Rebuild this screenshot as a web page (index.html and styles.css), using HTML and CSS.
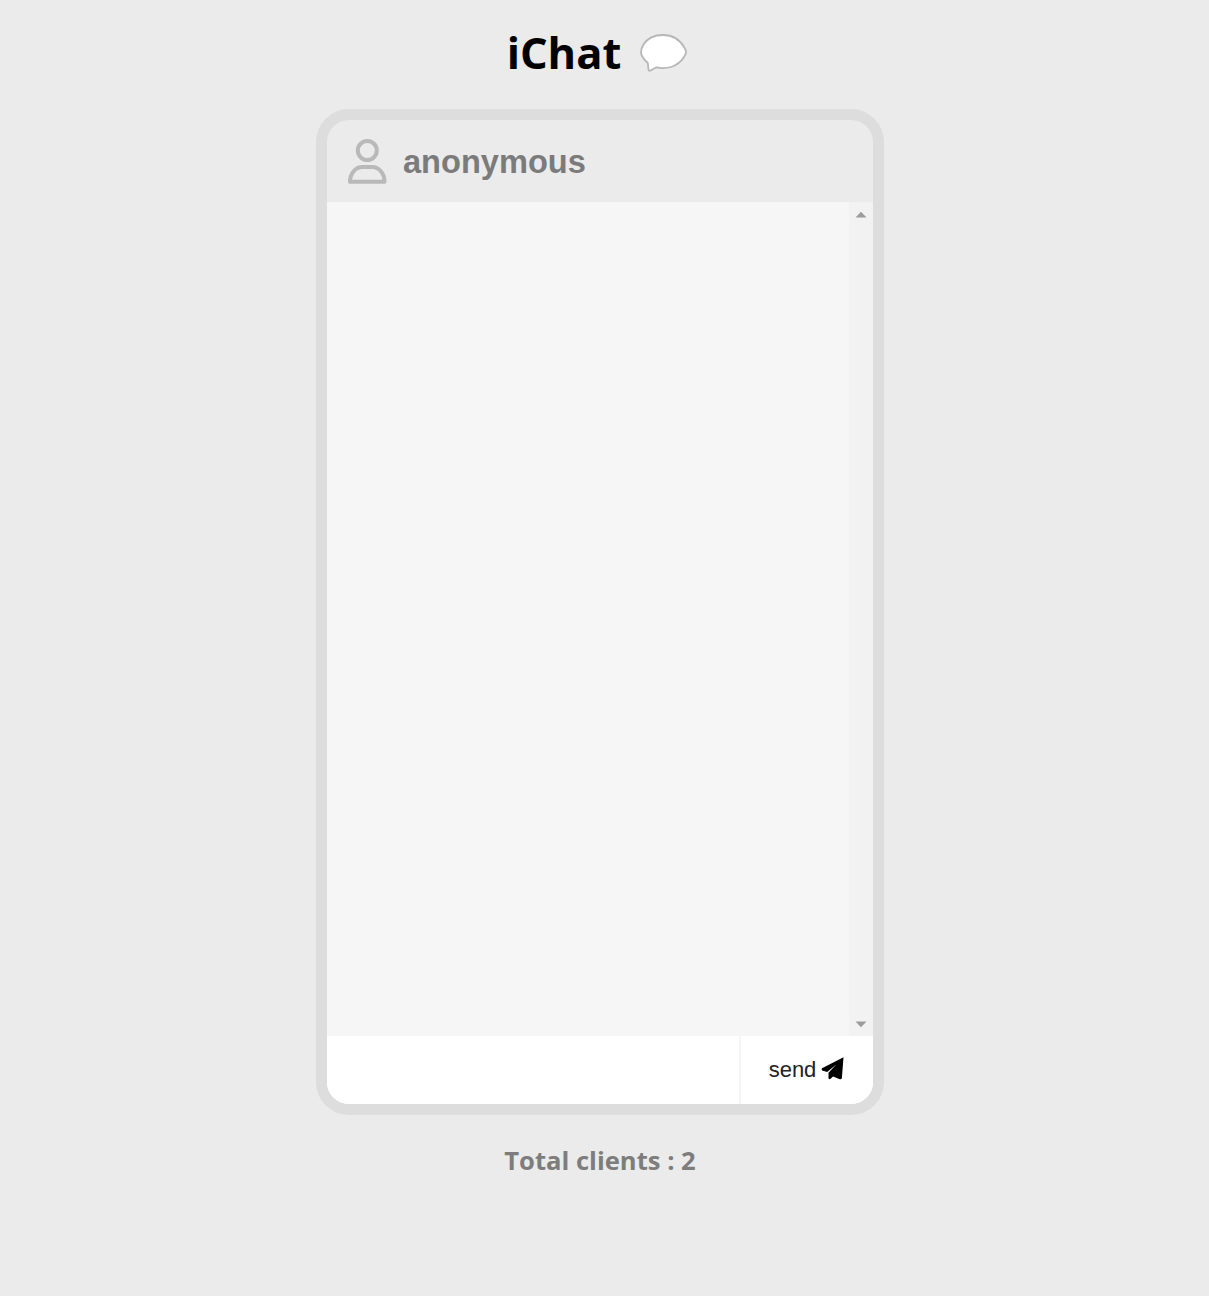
FILE: index.html
```html
<!DOCTYPE html>
<html lang="en">
<head>
<meta charset="utf-8">
<title>iChat</title>
<link rel="stylesheet" href="styles.css">
</head>
<body>
<main class="page">
  <header class="brand">
    <h1 class="brand-name">iChat</h1>
    <svg class="brand-icon" width="48" height="40" viewBox="0 0 48 40" aria-hidden="true">
      <path d="M24 2C15 2 8 6 4.500 11.500C1.500 16.500 1 19.500 3 23C4.500 26 6.500 28 8.800 30L9.500 36.500Q9.700 38.300 11.500 37.500L17.500 34.300C22 35.500 28 35 32 34C38 32.200 42.500 28 45.300 23.500C47.700 19.500 47.500 18 45.300 14.500C41 7 33.500 2 24 2Z" fill="#fff" stroke="#b7b7b7" stroke-width="1.800" stroke-linejoin="round"/>
    </svg>
  </header>
  <section class="chat">
    <div class="chat-head">
      <svg class="user-icon" width="40" height="47" viewBox="0 0 40 47" fill="none" stroke="#b9b9b9" stroke-width="4" stroke-linejoin="round" aria-hidden="true">
        <circle cx="20.300" cy="12.500" r="9.500"/>
        <path d="M3 43.800C3 36 8 29 15.500 29H25C32.500 29 37.500 36 37.500 43.800Z"/>
      </svg>
      <h2 class="user-name">anonymous</h2>
    </div>
    <div class="messages">
      <div class="scrollbar">
        <svg width="12" height="7" viewBox="0 0 12 7"><path d="M0.500 6.500L6 0.800L11.500 6.500Z" fill="#9c9c9c"/></svg>
        <svg width="12" height="7" viewBox="0 0 12 7"><path d="M0.500 0.500L6 6.200L11.500 0.500Z" fill="#9c9c9c"/></svg>
      </div>
    </div>
    <form class="composer">
      <input class="composer-input" type="text" aria-label="Message">
      <button class="send" type="button">send
        <svg width="23" height="23" viewBox="0 0 23 23" aria-hidden="true"><path d="M22.500 0.300L1 11.200Q0 12.500 1.200 13.500L6.200 15L15.500 7.300L7.500 15.800V21.500Q8.500 22.700 9.600 21.700L12 19.600L18.800 22.300Q20.600 22.600 20.900 21Z"/></svg>
      </button>
    </form>
  </section>
  <p class="clients">Total clients : 2</p>
</main>
</body>
</html>
```
FILE: styles.css
```css
* { box-sizing: border-box; }

body {
  margin: 0;
  min-height: 1296px;
  background: #ebebeb;
  font-family: "Open Sans", sans-serif;
}

.page {
  display: flex;
  flex-direction: column;
  align-items: center;
  width: 1200px;
}

.brand {
  display: flex;
  align-items: center;
  gap: 18px;
  height: 109px;
  padding: 0 0 4px 0;
  margin-left: -6px;
}

.brand-name {
  margin: 1px 0 0;
  color: #000;
  font-size: 43.500px;
  font-weight: 700;
  line-height: 60px;
}

.chat {
  display: flex;
  flex-direction: column;
  width: 568px;
  height: 1006px;
  border: 11px solid #ddd;
  border-radius: 33px;
  overflow: hidden;
}

.chat-head {
  display: flex;
  align-items: center;
  gap: 16px;
  height: 82px;
  padding-left: 20px;
}

.user-name {
  margin: 2px 0 0;
  color: #7b7b7b;
  font: 700 32.600px/40px "Liberation Sans", Arial, sans-serif;
}

.messages {
  display: flex;
  justify-content: flex-end;
  flex: 1;
  background: #f6f6f6;
}

.scrollbar {
  display: flex;
  flex-direction: column;
  justify-content: space-between;
  align-items: center;
  width: 24px;
  padding: 9px 1px 8px 0;
  background: #f2f2f2;
}

.composer {
  display: flex;
  height: 68px;
  background: #fff;
}

.composer-input {
  flex: 1;
  min-width: 0;
  padding: 0 20px;
  border: 0;
  background: #fff;
  font: 22px "Liberation Sans", Arial, sans-serif;
}

.send {
  display: flex;
  align-items: center;
  justify-content: center;
  gap: 5px;
  width: 134px;
  padding: 0 1px 1px 0;
  border: 0;
  border-left: 2px solid #f5f5f5;
  background: #fff;
  color: #222;
  font: 22px "Liberation Sans", Arial, sans-serif;
}

.send svg {
  margin-bottom: 2px;
  fill: #000;
}

.clients {
  margin: 28px 0 0;
  color: #7d7d7d;
  font-size: 25.600px;
  font-weight: 700;
  line-height: 36px;
}
```
